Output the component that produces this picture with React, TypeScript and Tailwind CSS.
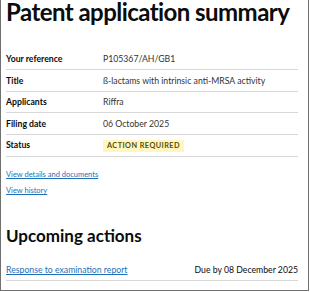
const rows = [
  { label: "Your reference", value: "P105367/AH/GB1" },
  { label: "Title", value: "ß-lactams with intrinsic anti-MRSA activity" },
  { label: "Applicants", value: "Riffra" },
  { label: "Filing date", value: "06 October 2025" },
];

export default function App() {
  return (
    <div
      className="w-[309px] h-[291px] bg-white border-x border-b border-[#707070] overflow-hidden text-[#0b0c0c]"
      style={{ fontFamily: 'Lato, Arial, sans-serif' }}
    >
      <div className="pl-[5px] pr-[10px]">
        <h1 className="text-[24px] leading-[24px] font-bold tracking-[-0.55px] whitespace-nowrap">
          Patent application summary
        </h1>

        <dl className="mt-[24.5px] text-[8.7px]">
          {rows.map((r) => (
            <div key={r.label} className="flex items-center h-[21.5px] border-b border-[#d8d8d8]">
              <dt className="w-[97px] font-bold">{r.label}</dt>
              <dd className="text-[#333]">{r.value}</dd>
            </div>
          ))}
          <div className="flex items-center h-[22px] border-b border-[#d8d8d8]">
            <dt className="w-[97px] font-bold">Status</dt>
            <dd>
              <span className="inline-block bg-[#fff7bf] text-[#594d00] font-bold text-[7.3px] tracking-[0.45px] px-[4px] leading-[12px]">
                ACTION REQUIRED
              </span>
            </dd>
          </div>
        </dl>

        <div className="mt-[13.5px] flex flex-col gap-[6px] text-[7.5px] text-[#1d70b8]">
          <a href="#" className="underline leading-[10px]">View details and documents</a>
          <a href="#" className="underline leading-[10px]">View history</a>
        </div>

        <h2 className="text-[17px] leading-[20px] font-bold mt-[29.5px]">Upcoming actions</h2>

        <div className="mt-[14.5px] flex items-center justify-between h-[21px] border-b border-[#d8d8d8] text-[8.7px]">
          <a href="#" className="underline text-[#1d70b8]">Response to examination report</a>
          <span>Due by 08 December 2025</span>
        </div>
      </div>
    </div>
  );
}
